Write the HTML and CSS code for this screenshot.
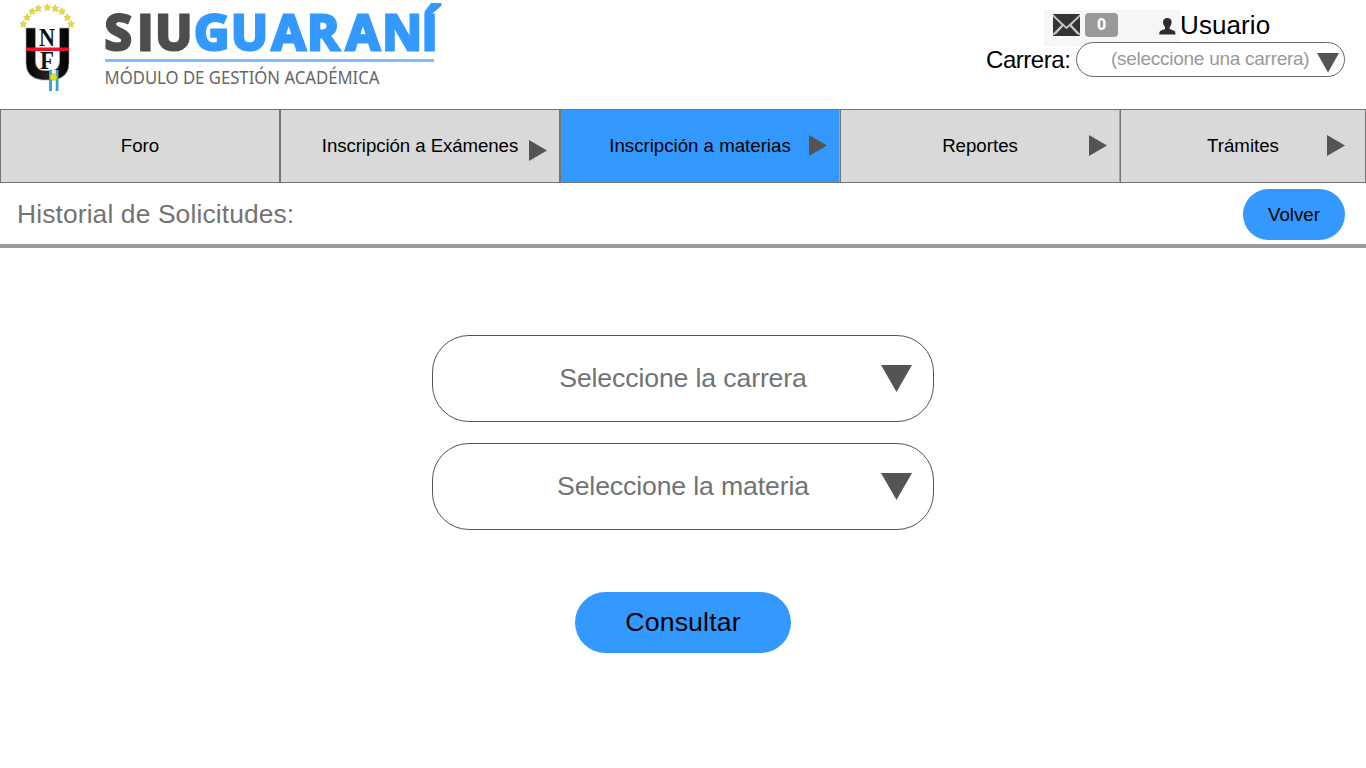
FILE: index.html
```html
<!DOCTYPE html>
<html lang="es">
<head>
<meta charset="utf-8">
<title>SIU Guaraní - Historial de Solicitudes</title>
<link rel="stylesheet" href="styles.css">
</head>
<body>
<header class="header">
  <div class="brand">
    <svg class="crest" width="60" height="94" viewBox="0 0 60 94">
      <defs>
        <path id="star" d="M0-3.500 1.200-1.200 3.500-.9 1.800.8 2.300 3.300 0 2.100-2.300 3.300-1.800.8-3.500-.9-1.200-1.200Z"/>
        <linearGradient id="ink" x1="0" x2="1" y1="0" y2="0">
          <stop offset="0" stop-color="#000"/><stop offset=".5" stop-color="#222"/><stop offset="1" stop-color="#000"/>
        </linearGradient>
      </defs>
      <g fill="#e6dc35" stroke="#c6bc48" stroke-width=".5">
        <use href="#star" x="8.300" y="24"/><use href="#star" x="12" y="17.300"/><use href="#star" x="17.300" y="11.300"/>
        <use href="#star" x="23.300" y="8.300"/><use href="#star" x="32.300" y="7.300"/><use href="#star" x="40.200" y="8.300"/>
        <use href="#star" x="47" y="11.300"/><use href="#star" x="52.300" y="17.300"/><use href="#star" x="56" y="24"/>
      </g>
      <path d="M11 28h9.500v33q0 9.500 9 9.500h6q9 0 9-9.500V28H54v35q0 15-16 17H27q-16-2-16-17Z" fill="url(#ink)" stroke="#aaa" stroke-width=".7"/>
      <text class="crest-letter" x="32" y="46" textLength="16" lengthAdjust="spacingAndGlyphs">N</text>
      <text class="crest-letter" x="32" y="69" textLength="14" lengthAdjust="spacingAndGlyphs">F</text>
      <path d="M11 47.500h43v3.600H11z" fill="#e9142b"/>
      <path d="M34 70h9.500v21H34z" fill="#36a5d5"/><path d="M37 70h3.700v21H37z" fill="#fff"/>
      <circle cx="38.500" cy="77" r="3.400" fill="#eedf20" stroke="#b5aa25" stroke-width=".5"/>
    </svg>
    <svg class="logo" width="340" height="94" viewBox="0 0 340 94">
      <text class="logo-dark" x="-.3 32.300 50.300" y="49.500">SIU</text>
      <text class="logo-blue" x="89 126 166.700 202 241 277.200 316.500" y="49.500">GUARANÍ</text>
      <path d="M0 59h329v3H0z" fill="#7dbcff"/>
      <text class="logo-sub" x="-.5" y="84" textLength="275" lengthAdjust="spacingAndGlyphs">MÓDULO DE GESTIÓN ACADÉMICA</text>
    </svg>
  </div>
  <div class="account">
    <div class="user">
      <div class="user-icons">
        <svg width="27" height="22" viewBox="0 0 27 22">
          <path d="M0 0h27v22H0z" fill="#333"/>
          <path d="M0 1 9.500 11 0 21M27 1 17.500 11 27 21M1 2.500 13.500 14 26 2.500M2 20 9.500 12M25 20 17.500 12" fill="none" stroke="#c8c8c8" stroke-width="1.700"/>
        </svg>
        <span class="count">0</span>
        <svg class="person" width="17" height="17" viewBox="0 0 17 17">
          <path d="M8.300 0C5.400 0 3.900 1.800 4.100 4.200c.1 2 .8 3.700 1.900 4.700v2L1.500 12.700Q.2 13.300.2 16.500h16.300q0-3.200-1.300-3.800l-4.500-1.800v-2c1.100-1 1.800-2.700 1.900-4.700C12.800 1.800 11.200 0 8.300 0Z" fill="#2d2d2d"/>
        </svg>
      </div>
      <span class="user-name">Usuario</span>
    </div>
    <div class="career">
      <span class="career-label">Carrera:</span>
      <div class="career-select"><span>(seleccione una carrera)</span>
        <svg width="22" height="20" viewBox="0 0 22 20"><path d="M0 0h22L11 19.500z" fill="#545454"/></svg>
      </div>
    </div>
  </div>
</header>
<nav class="nav">
  <a class="tab"><span>Foro</span></a>
  <a class="tab"><span class="exams">Inscripción a Exámenes</span><svg class="arrow low" viewBox="0 0 18 21"><path d="M0 0 18 10.500 0 21z"/></svg></a>
  <a class="tab active"><span>Inscripción a materias</span><svg class="arrow" viewBox="0 0 18 21"><path d="M0 0 18 10.500 0 21z"/></svg></a>
  <a class="tab"><span>Reportes</span><svg class="arrow" viewBox="0 0 18 21"><path d="M0 0 18 10.500 0 21z"/></svg></a>
  <a class="tab last"><span>Trámites</span><svg class="arrow" viewBox="0 0 18 21"><path d="M0 0 18 10.500 0 21z"/></svg></a>
</nav>
<section class="titlebar">
  <h1 class="title">Historial de Solicitudes:</h1>
  <button class="back">Volver</button>
</section>
<main class="form">
  <div class="select"><span>Seleccione la carrera</span><svg class="down" viewBox="0 0 31 27"><path d="M0 0h31L15.500 27z"/></svg></div>
  <div class="select"><span>Seleccione la materia</span><svg class="down" viewBox="0 0 31 27"><path d="M0 0h31L15.500 27z"/></svg></div>
  <button class="submit">Consultar</button>
</main>
</body>
</html>
```
FILE: styles.css
```css
* { box-sizing: border-box; }
body { margin: 0; background: #fff; color: #000; font-family: "Liberation Sans", Arial, sans-serif; overflow: hidden; }
button { border: 0; color: #000; background: #3399ff; font-family: inherit; padding: 0; }
svg { display: block; flex: none; }

.header { height: 109px; display: flex; justify-content: space-between; }
.brand { display: flex; padding-left: 15px; gap: 30px; }
.crest-letter { font-family: "Liberation Serif", serif; font-weight: bold; font-size: 26px; text-anchor: middle; fill: #111; }
.logo { overflow: visible; }
.logo-dark, .logo-blue { font-family: "Open Sans", sans-serif; font-weight: 700; font-size: 49px; stroke-width: 3px; }
.logo-dark { fill: #4d4d4d; stroke: #4d4d4d; }
.logo-blue { fill: #3399ff; stroke: #3399ff; }
.logo-sub { font-family: "Noto Sans", sans-serif; font-size: 18px; fill: #666; }

.account { display: flex; flex-direction: column; width: 380px; padding-top: 10px; }
.user { display: flex; height: 32px; padding-left: 58px; }
.user-icons { display: flex; align-items: flex-start; width: 136px; height: 36px; padding: 4px 0 0 9px; background: #f6f6f6; }
.count { width: 33px; height: 24px; margin: -1px 0 0 5px; border-radius: 4px; background: #999; color: #fff; font: bold 16px/23px "Open Sans", sans-serif; text-align: center; }
.person { margin: 4px 0 0 41px; }
.user-name { font-size: 26px; line-height: 30px; letter-spacing: .1px; }
.career { display: flex; height: 35px; }
.career-label { width: 90px; font-size: 24px; line-height: 36px; letter-spacing: -.45px; }
.career-select { position: relative; z-index: 1; display: flex; width: 269px; height: 35px; border: 1px solid #666; border-radius: 18px; background: #fff; padding: 10px 5px 0 34px; justify-content: space-between; }
.career-select span { color: #999; font-size: 19px; line-height: 22px; letter-spacing: -.27px; margin-top: -5px; white-space: nowrap; }

.nav { display: grid; grid-template-columns: 280px 280px 280px 280px 246px; height: 74px; }
.tab { position: relative; display: flex; align-items: center; justify-content: center; border: 1px solid #737373; background: #d9d9d9; font-size: 18.670px; }
.tab.active { background: #3399ff; }
.tab.active, .tab.active + .tab { border-right-color: #a3a3a3; }
.exams { letter-spacing: -.08px; }
.arrow { position: absolute; right: 12px; top: 25px; width: 18px; height: 21px; fill: #545454; }
.arrow.low { top: 30px; }
.last .arrow { right: 20px; }

.titlebar { display: flex; justify-content: space-between; height: 65px; padding: 6px 21px 0 17px; border-bottom: 4px solid #9b9b9d; }
.title { margin: 0; color: #737373; font-weight: 400; font-size: 26.400px; line-height: 51px; letter-spacing: .12px; }
.back { width: 102px; height: 51px; border-radius: 26px; font-size: 18.670px; }

.form { display: flex; flex-direction: column; align-items: center; padding-top: 87px; }
.select { position: relative; display: flex; align-items: center; justify-content: center; width: 502px; height: 87px; margin-bottom: 21px; border: 1px solid #545454; border-radius: 37px; color: #737373; font-size: 26.670px; letter-spacing: -.14px; }
.down { position: absolute; right: 21px; top: 29px; width: 31px; height: 27px; fill: #545454; }
.submit { width: 216px; height: 61px; margin-top: 41px; border-radius: 31px; font-size: 26.670px; letter-spacing: .15px; }
```
